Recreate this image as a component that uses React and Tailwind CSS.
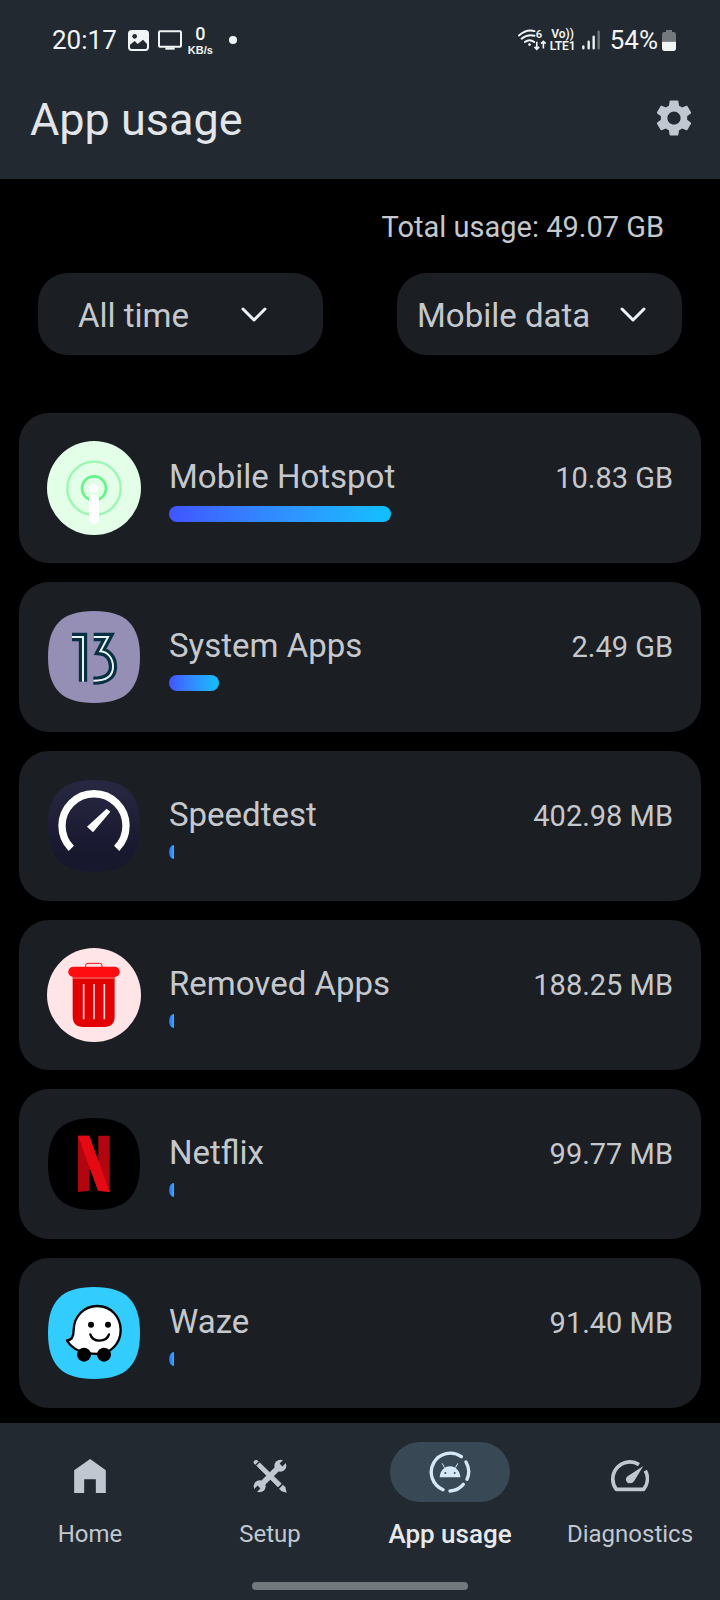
import {useId, useState} from 'react'
import {MdSettings} from 'react-icons/md'

// ─── Forma "squircle" de los iconos ───────────────────────────────────────────
const SQUIRCLE = 'M141 3C237 3 279 45 279 141S237 279 141 279S3 237 3 141S45 3 141 3Z'

// ─── Iconos de aplicaciones ───────────────────────────────────────────────────
const AppIcon = ({children}) => (
  <svg viewBox="0 0 282 282" className="my-7 size-[94px] shrink-0" aria-hidden="true">
    {children}
  </svg>
)

const HotspotIcon = () => (
  <AppIcon>
    <circle cx="141" cy="141" r="141" fill="#e3ffe8" />
    <circle cx="141" cy="142" r="80" fill="none" stroke="#9af8b0" strokeWidth="7" />
    <circle cx="141" cy="142" r="36" fill="none" stroke="#62f588" strokeWidth="8" />
    <path d="M141 176V234" stroke="#fff" strokeWidth="30" strokeLinecap="round" />
    <circle cx="141" cy="142" r="12" fill="#fff" />
  </AppIcon>
)

const SystemIcon = () => (
  <AppIcon>
    <path d={SQUIRCLE} fill="#958fb5" />
    <g fill="none" stroke="#073042" strokeWidth="25" strokeMiterlimit="8">
      <path d="M75 81H108V215" />
      <path d="M140 81H183L160 124C184 126 198 146 198 170C198 196 179 212 139 212" />
    </g>
    <g fill="none" stroke="#e8f4f6" strokeWidth="6" strokeMiterlimit="8">
      <path d="M75 81H108V215" />
      <path d="M140 81H183L160 124C184 126 198 146 198 170C198 196 179 212 139 212" />
    </g>
  </AppIcon>
)

const SpeedtestIcon = () => {
  const gradientId = useId()
  return (
    <AppIcon>
      <defs>
        <linearGradient id={gradientId} x1="0" y1="0" x2="0" y2="1">
          <stop offset="0" stopColor="#282843" />
          <stop offset="0.8" stopColor="#17182e" />
        </linearGradient>
      </defs>
      <path d={SQUIRCLE} fill={`url(#${gradientId})`} />
      <path d="M73 208A96 96 0 1 1 209 208" fill="none" stroke="#fff" strokeWidth="22" />
      <path d="M179 89L190 98L138 160L120 143Z" fill="#fff" />
    </AppIcon>
  )
}

const TrashIcon = () => (
  <AppIcon>
    <circle cx="141" cy="141" r="141" fill="#ffe5e7" />
    <path d="M116 57V53Q116 46 123 46H158Q165 46 165 53V57" fill="none" stroke="#e11" strokeWidth="3" />
    <path d="M77 86H203V205Q203 237 171 237H109Q77 237 77 205Z" fill="#e30000" />
    <path d="M77 90H203" stroke="#ff8a8a" strokeWidth="3" />
    <rect x="64" y="56" width="154" height="31" rx="15" fill="#ff0c10" />
    <path d="M110 108V214M141 108V214M172 108V214" stroke="#ffd5d5" strokeWidth="5" />
  </AppIcon>
)

const NetflixIcon = () => (
  <AppIcon>
    <path d={SQUIRCLE} fill="#000" />
    <path d="M93 56H127V221L93 225Z" fill="#b1060f" />
    <path d="M154 56H188V225L154 221Z" fill="#b1060f" />
    <path d="M93 56H127L188 225L153 221Z" fill="#e50914" />
  </AppIcon>
)

const WazeIcon = () => (
  <AppIcon>
    <path d={SQUIRCLE} fill="#33ccff" />
    <path
      d="M80 132C80 92 111 60 151 60S221 92 221 132S191 204 151 204C113 204 76 192 60 163C74 163 80 151 80 132Z"
      fill="#fff"
      stroke="#000"
      strokeWidth="7"
      strokeLinejoin="round"
    />
    <circle cx="111" cy="206" r="21" />
    <circle cx="171" cy="206" r="21" />
    <circle cx="132" cy="116" r="9" />
    <circle cx="183" cy="116" r="9" />
    <path d="M130 145C137 170 178 170 186 145" fill="none" stroke="#000" strokeWidth="7" strokeLinecap="round" />
  </AppIcon>
)

// ─── Iconos de navegación ─────────────────────────────────────────────────────
const HomeIcon = () => (
  <svg viewBox="0 0 95 102" className="h-[34px] w-8" fill="currentColor" aria-hidden="true">
    <path d="M48 0L95 34V102H65V61H30V102H0V34Z" />
  </svg>
)

const SetupIcon = () => (
  <svg viewBox="0 0 102 102" className="size-[34px]" fill="currentColor" aria-hidden="true">
    {/* llave */}
    <circle cx="82" cy="20" r="18" />
    <circle cx="20" cy="82" r="18" />
    <path d="M82 20L20 82" stroke="currentColor" strokeWidth="17" />
    <path d="M84 18L104 -2M18 84L-2 104" stroke="#222930" strokeWidth="12" />
    {/* lápiz */}
    <path d="M11 20L20 11L85 74L75 84Z" stroke="currentColor" strokeWidth="2" />
    <path d="M17 7L11 3Q6 2 3 6Q0 11 4 15L7 17Z" />
    <path d="M90 77L97 85L101 101L86 97L78 89Z" />
  </svg>
)

const UsageIcon = () => (
  <svg viewBox="0 0 126 126" className="size-[42px]" aria-hidden="true">
    <g fill="none" stroke="#d5e8f8" strokeWidth="10" strokeLinecap="round">
      <path d="M97 17A57 57 0 1 0 42 116" />
      <path d="M111 33A57 57 0 0 1 114 85" />
      <path d="M103 100A57 57 0 0 1 63 120" />
    </g>
    <g stroke="#d5e8f8" strokeWidth="3" strokeLinecap="round">
      <path d="M40 38L46 49M86 38L80 49" />
    </g>
    <path d="M32 79C33 60 46 46 63 46S93 60 94 79Z" fill="#d5e8f8" />
    <circle cx="49" cy="66" r="3" fill="#384955" />
    <circle cx="77" cy="66" r="3" fill="#384955" />
  </svg>
)

const DiagnosticsIcon = () => (
  <svg viewBox="0 0 114 96" className="h-8 w-[38px]" aria-hidden="true">
    <path
      d="M84 14A51 51 0 0 0 16 88H98A51 51 0 0 0 103 32"
      fill="none"
      stroke="currentColor"
      strokeWidth="11"
      strokeLinejoin="round"
    />
    <path d="M97 18L70 62C65 71 52 72 47 65C42 57 46 50 52 47Z" fill="currentColor" />
  </svg>
)

// ─── Barra de estado ──────────────────────────────────────────────────────────
const StatusBar = () => (
  <div className="flex h-20 items-center justify-between pl-[52px] pr-11 text-[26px] leading-8 text-[#f2f5f6]">
    <div className="flex items-center">
      <span>20:17</span>
      <svg viewBox="0 0 63 63" className="ml-[11px] size-[21px]" aria-hidden="true">
        <rect width="63" height="63" rx="11" fill="currentColor" />
        <circle cx="20" cy="19" r="7" fill="#222930" />
        <path d="M6 44L20 33L29 42L45 29L57 42V52Q57 57 52 57H11Q6 57 6 52Z" fill="#222930" />
      </svg>
      <svg viewBox="0 0 72 60" className="ml-[9px] h-5 w-6" aria-hidden="true">
        <rect x="3" y="4" width="66" height="46" rx="3" fill="none" stroke="currentColor" strokeWidth="6" />
        <path d="M22 52H50V59H22Z" fill="currentColor" />
      </svg>
      <div className="ml-1.5 flex flex-col items-center">
        <span className="text-[18px] font-medium leading-5">0</span>
        <span className="font-['Liberation_Sans',sans-serif] text-[11px] font-bold leading-3">KB/s</span>
      </div>
      <span className="ml-4 size-2 rounded-full bg-[#f2f5f6]" />
    </div>
    <div className="flex items-center">
      <svg viewBox="0 0 88 66" className="h-[22px] w-[29px]" fill="none" stroke="currentColor" aria-hidden="true">
        <path d="M3 19Q26 -1 50 6M11 29Q29 14 50 20M21 39Q35 28 49 39" strokeWidth="6" strokeLinecap="round" />
        <circle cx="35" cy="47" r="4" fill="currentColor" stroke="none" />
        <path d="M57 38V61M50 54L57 61L64 54M77 59V37M70 44L77 37L84 44" strokeWidth="5" />
        <text x="54" y="27" fontSize="34" fontWeight="600" fill="currentColor" stroke="none">6</text>
      </svg>
      <div className="ml-[3px] flex flex-col items-center text-[12px] font-semibold leading-3">
        <span>Vo))</span>
        <span>LTE1</span>
      </div>
      <svg viewBox="0 0 54 60" className="ml-1.5 h-5 w-[18px]" strokeWidth="7" strokeLinecap="round" aria-hidden="true">
        <path d="M4 49V55M20 35V55M35 20V55" stroke="currentColor" />
        <path d="M50 5V55" stroke="#6f777c" />
      </svg>
      <span className="ml-2.5">54%</span>
      <svg viewBox="0 0 42 63" className="ml-1 h-[21px] w-3.5" aria-hidden="true">
        <path d="M12 0H30V6H35Q42 6 42 13V35H0V13Q0 6 7 6H12Z" fill="#74797d" />
        <path d="M0 35H42V55Q42 63 34 63H8Q0 63 0 55Z" fill="currentColor" />
      </svg>
    </div>
  </div>
)

// ─── Filtros ──────────────────────────────────────────────────────────────────
const Filter = ({label, options, selectClass, chevronClass}) => {
  const [value, setValue] = useState(options[0])
  return (
    <div className="relative flex-1">
      <select
        aria-label={label}
        value={value}
        onChange={(e) => setValue(e.target.value)}
        className={`h-[82px] w-full appearance-none rounded-[30px] bg-[#1b1e22] pt-1 text-[33px] text-[#c5c8cd] ${selectClass}`}
      >
        {options.map((o) => (
          <option key={o}>{o}</option>
        ))}
      </select>
      <svg
        viewBox="0 0 26 16"
        className={`pointer-events-none absolute top-[33px] h-4 w-[26px] ${chevronClass}`}
        fill="none"
        stroke="#edf3fb"
        strokeWidth="3"
        strokeLinecap="round"
        strokeLinejoin="round"
        aria-hidden="true"
      >
        <path d="M2 3L13 14L24 3" />
      </svg>
    </div>
  )
}

// ─── Lista de consumo ─────────────────────────────────────────────────────────
const APPS = [
  {name: 'Mobile Hotspot', usage: '10.83 GB', percent: 44, Icon: HotspotIcon},
  {name: 'System Apps', usage: '2.49 GB', percent: 10, Icon: SystemIcon},
  {name: 'Speedtest', usage: '402.98 MB', percent: 1, Icon: SpeedtestIcon},
  {name: 'Removed Apps', usage: '188.25 MB', percent: 1, Icon: TrashIcon},
  {name: 'Netflix', usage: '99.77 MB', percent: 1, Icon: NetflixIcon},
  {name: 'Waze', usage: '91.40 MB', percent: 1, Icon: WazeIcon},
]

const AppRow = ({name, usage, percent, Icon}) => (
  <li className="flex rounded-[30px] bg-[#1b1e22] px-7">
    <Icon />
    <div className="ml-7 flex-1 pt-11">
      <div className="flex items-baseline justify-between leading-10 text-[#c5c8cd]">
        <span className="text-[33px]">{name}</span>
        <span className="text-[29px]">{usage}</span>
      </div>
      <div className="mt-2 flex h-4 items-center">
        <div
          className={`bg-linear-to-r from-[#4054ff] to-[#10c0ff] ${
            percent > 1 ? 'h-4 rounded-full' : 'h-3.5 rounded-[100%_0_0_100%/50%_0_0_50%]'
          }`}
          style={{width: `${percent}%`}}
        />
      </div>
    </div>
  </li>
)

const TABS = [
  {label: 'Home', Icon: HomeIcon},
  {label: 'Setup', Icon: SetupIcon},
  {label: 'App usage', Icon: UsageIcon, active: true},
  {label: 'Diagnostics', Icon: DiagnosticsIcon},
]

const App = () => (
  <div className="flex min-h-screen flex-col bg-black font-[Roboto,sans-serif]">
    <header className="bg-[#222930]">
      <StatusBar />
      <div className="flex h-[99px] items-start justify-between pl-[30px] pr-6">
        <h1 className="pt-3 text-[45px] leading-[56px] text-[#e2e5e9]">App usage</h1>
        <button aria-label="Settings" className="pt-4 text-[#c1c7d0]">
          <MdSettings className="size-11" />
        </button>
      </div>
    </header>

    <main className="flex-1">
      <p className="pr-14 pt-7 text-right text-[29px] leading-10 text-[#c5c8cd]">Total usage: 49.07 GB</p>
      <div className="mt-[26px] flex gap-[74px] px-[38px]">
        <Filter
          label="Period"
          options={['All time', 'This month', 'Today']}
          selectClass="pl-10 pr-24"
          chevronClass="right-14"
        />
        <Filter
          label="Connection"
          options={['Mobile data', 'Wi-Fi']}
          selectClass="pl-5 pr-16"
          chevronClass="right-9"
        />
      </div>
      <ul className="mt-[58px] flex flex-col gap-[19px] px-[19px] pb-3.5">
        {APPS.map((app) => (
          <AppRow key={app.name} {...app} />
        ))}
      </ul>
    </main>

    <nav className="flex flex-col items-center bg-[#222930] pb-2.5 pt-[19px]">
      <div className="flex w-full">
        {TABS.map(({label, Icon, active}) => (
          <a key={label} href="#" className="flex flex-1 flex-col items-center text-[#c1c7d0]">
            <span className="flex h-[68px] items-center">
              {active ? (
                <span className="flex h-[60px] w-[120px] items-center justify-center self-start rounded-full bg-[#384955]">
                  <Icon />
                </span>
              ) : (
                <Icon />
              )}
            </span>
            <span
              className={`mt-2 leading-8 ${active ? 'text-[26px] font-medium text-[#e6eaee]' : 'text-[24px]'}`}
            >
              {label}
            </span>
          </a>
        ))}
      </div>
      <div className="mt-8 h-2 w-[216px] rounded-full bg-[#72797c]" />
    </nav>
  </div>
)

export default App
